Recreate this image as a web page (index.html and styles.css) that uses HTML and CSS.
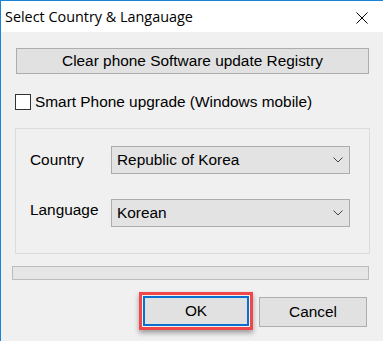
FILE: index.html
```html
<!DOCTYPE html>
<html>
<head>
<meta charset="utf-8">
<link rel="stylesheet" href="styles.css">
</head>
<body>
<div class="window">
  <div class="titlebar">
    <span class="title">Select Country &amp; Langauage</span>
    <svg class="close" width="12" height="12" viewBox="0 0 12 12"><path d="M0.5 0.5 L11.5 11.5 M11.5 0.5 L0.5 11.5" stroke="#000" stroke-width="1" fill="none"/></svg>
  </div>
  <div class="content">
    <div class="btn clear-btn">Clear phone Software update Registry</div>
    <div class="check-row">
      <span class="checkbox"></span>
      <span>Smart Phone upgrade (Windows mobile)</span>
    </div>
    <div class="group">
      <div class="field">
        <span class="label">Country</span>
        <div class="combo"><span>Republic of Korea</span><svg class="chev" width="10" height="6" viewBox="0 0 10 6"><path d="M0.5 0.5 L5 5 L9.5 0.5" stroke="#444" stroke-width="1" fill="none"/></svg></div>
      </div>
      <div class="field">
        <span class="label label-up">Language</span>
        <div class="combo"><span>Korean</span><svg class="chev" width="10" height="6" viewBox="0 0 10 6"><path d="M0.5 0.5 L5 5 L9.5 0.5" stroke="#444" stroke-width="1" fill="none"/></svg></div>
      </div>
    </div>
    <div class="progress"></div>
    <div class="buttons">
      <div class="highlight"><div class="btn ok-btn">OK</div></div>
      <div class="btn cancel-btn">Cancel</div>
    </div>
  </div>
</div>
</body>
</html>
```
FILE: styles.css
```css
html, body {
  margin: 0;
  padding: 0;
}
body {
  width: 383px;
  height: 341px;
  overflow: hidden;
  background: #f0f0f0;
  font-family: "Liberation Sans", Arial, sans-serif;
  font-size: 15.4px;
  color: #000;
}
.window {
  height: 340px;
  border-left: 1px solid #1883d7;
  border-top: 1px solid #1883d7;
  background: #f0f0f0;
}
.titlebar {
  height: 31px;
  background: #fff;
  display: flex;
  align-items: center;
  justify-content: space-between;
  padding: 0 15px 0 4px;
}
.title {
  font-family: "Open Sans", "Noto Sans", sans-serif;
  font-size: 14.4px;
}
.close {
  display: block;
  position: relative;
  top: 1px;
}
.content {
  display: flex;
  flex-direction: column;
}
.btn {
  box-sizing: border-box;
  background: #e1e1e1;
  border: 1px solid #adadad;
  display: flex;
  align-items: center;
  justify-content: center;
}
.clear-btn {
  margin: 16px 14px 0 15px;
  height: 26px;
}
.check-row {
  margin: 20px 0 0 14px;
  height: 16px;
  display: flex;
  align-items: center;
  gap: 4px;
}
.checkbox {
  box-sizing: border-box;
  width: 16px;
  height: 16px;
  border: 1px solid #333;
  background: #fff;
}
.group {
  box-sizing: border-box;
  margin: 18px 13px 0 14px;
  height: 126px;
  border: 1px solid #dcdcdc;
  padding: 17px 19px 0 14px;
  display: flex;
  flex-direction: column;
  gap: 25px;
}
.field {
  display: flex;
  align-items: center;
}
.label {
  width: 81px;
}
.label-up {
  position: relative;
  top: -3px;
}
.combo {
  box-sizing: border-box;
  flex: 1;
  height: 28px;
  background: #e3e3e3;
  border: 1px solid #acacac;
  display: flex;
  align-items: center;
  justify-content: space-between;
  padding: 0 6px 0 5px;
}
.chev {
  display: block;
}
.progress {
  box-sizing: border-box;
  margin: 12px 14px 0 11px;
  height: 14px;
  background: #e6e6e6;
  border: 1px solid #bcbcbc;
}
.buttons {
  margin: 12px 16px 0 0;
  display: flex;
  justify-content: flex-end;
  align-items: center;
  gap: 6px;
}
.highlight {
  border: 3px solid #f0474a;
  padding: 1px;
  box-shadow: 0 3px 5px rgba(0, 0, 0, 0.35);
}
.ok-btn {
  width: 106px;
  height: 30px;
  border: 2px solid #0a6fd0;
}
.cancel-btn {
  width: 108px;
  height: 30px;
  margin-top: 1px;
}
```
